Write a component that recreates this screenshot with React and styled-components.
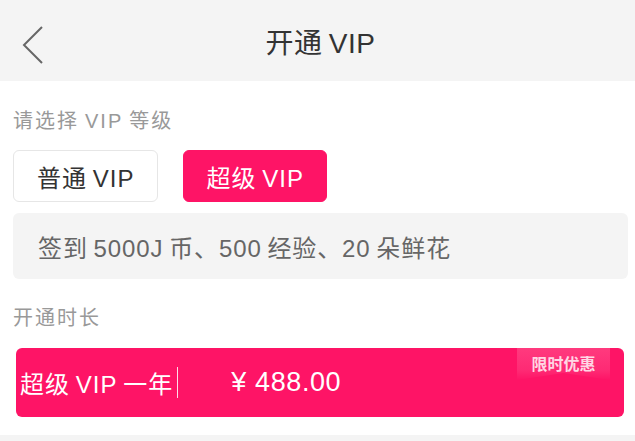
import styled, { createGlobalStyle } from "styled-components";

const GlobalStyle = createGlobalStyle`
  html, body {
    margin: 0;
    padding: 0;
    background: #fff;
  }
  body {
    font-family: "Liberation Sans", "Noto Sans CJK SC", sans-serif;
  }
`;

const PINK = "#fe1466";

const Page = styled.div`
  width: 635px;
  min-height: 441px;
  display: flex;
  flex-direction: column;
  background: #fff;
`;

const Header = styled.header`
  height: 81px;
  background: #f4f4f4;
  display: flex;
  align-items: center;
  justify-content: center;
  position: relative;
`;

const BackButton = styled.button`
  position: absolute;
  left: 16px;
  top: 22px;
  width: 34px;
  height: 46px;
  border: none;
  background: none;
  padding: 0;
  display: flex;
  align-items: center;
  justify-content: center;
`;

const Title = styled.h1`
  margin: 0;
  font-size: 28px;
  font-weight: 400;
  letter-spacing: 0.5px;
  color: #333;
  padding-left: 6px;
`;

const Content = styled.main`
  flex: 1;
  display: flex;
  flex-direction: column;
  padding: 26px 7px 18px 13px;
`;

const Label = styled.div`
  font-size: 20px;
  line-height: 28px;
  letter-spacing: 2px;
  color: #999;
  margin-bottom: ${(p) => p.$gap}px;
`;

const LevelRow = styled.div`
  display: flex;
  gap: 25px;
`;

const LevelButton = styled.button`
  height: 52px;
  padding: 0 22px 0 23px;
  border-radius: 6px;
  font-family: inherit;
  font-size: 24px;
  letter-spacing: 1px;
  border: 1px solid ${(p) => (p.$active ? PINK : "#e6e6e6")};
  background: ${(p) => (p.$active ? PINK : "#fff")};
  color: ${(p) => (p.$active ? "#fff" : "#333")};
`;

const Perks = styled.div`
  margin-top: 11px;
  margin-bottom: 25px;
  height: 66px;
  border-radius: 6px;
  background: #f4f4f4;
  display: flex;
  align-items: center;
  padding-left: 25px;
  font-size: 24px;
  letter-spacing: 0.9px;
  color: #666;
`;

const PlanCard = styled.div`
  margin: 0 4px 0 3px;
  height: 69px;
  border-radius: 6px;
  background: ${PINK};
  color: #fff;
  display: flex;
  align-items: center;
  padding-left: 4px;
  font-size: 24px;
  letter-spacing: 1px;
  position: relative;
`;

const PlanName = styled.span`
  display: flex;
  align-items: center;
`;

const Caret = styled.span`
  display: inline-block;
  width: 1px;
  height: 31px;
  background: rgba(255, 255, 255, 0.85);
  margin-left: 4px;
`;

const Price = styled.span`
  margin-left: 53px;
  font-size: 27px;
  letter-spacing: 0.6px;
`;

const Badge = styled.div`
  position: absolute;
  top: 0;
  right: 14px;
  width: 93px;
  height: 32px;
  display: flex;
  justify-content: center;
  padding-top: 3px;
  box-sizing: border-box;
  font-size: 16px;
  font-weight: 700;
  letter-spacing: 0;
  color: #ffd6e4;
  background: linear-gradient(#ff3a7e, #fe2a74 70%, rgba(254, 20, 102, 0));
  clip-path: polygon(0 0, 100% 0, 100% 100%, 50% 78%, 0 100%);
`;

const Footer = styled.div`
  height: 6px;
  background: #f4f4f4;
`;

export default function App() {
  return (
    <Page>
      <GlobalStyle />
      <Header>
        <BackButton aria-label="返回">
          <svg width="24" height="40" viewBox="0 0 24 40">
            <polyline
              points="21,2 3,20 21,38"
              fill="none"
              stroke="#666"
              strokeWidth="2"
            />
          </svg>
        </BackButton>
        <Title>开通{"\u2009"}VIP</Title>
      </Header>
      <Content>
        <Label $gap={15}>请选择{"\u2009"}VIP{"\u2009"}等级</Label>
        <LevelRow>
          <LevelButton>普通{"\u2009"}VIP</LevelButton>
          <LevelButton $active>超级{"\u2009"}VIP</LevelButton>
        </LevelRow>
        <Perks>
          签到{"\u2009"}5000J{"\u2009"}币、500{"\u2009"}经验、20{"\u2009"}朵鲜花
        </Perks>
        <Label $gap={16}>开通时长</Label>
        <PlanCard>
          <PlanName>
            超级{"\u2009"}VIP{"\u2009"}一年
            <Caret />
          </PlanName>
          <Price>¥ 488.00</Price>
          <Badge>限时优惠</Badge>
        </PlanCard>
      </Content>
      <Footer />
    </Page>
  );
}
